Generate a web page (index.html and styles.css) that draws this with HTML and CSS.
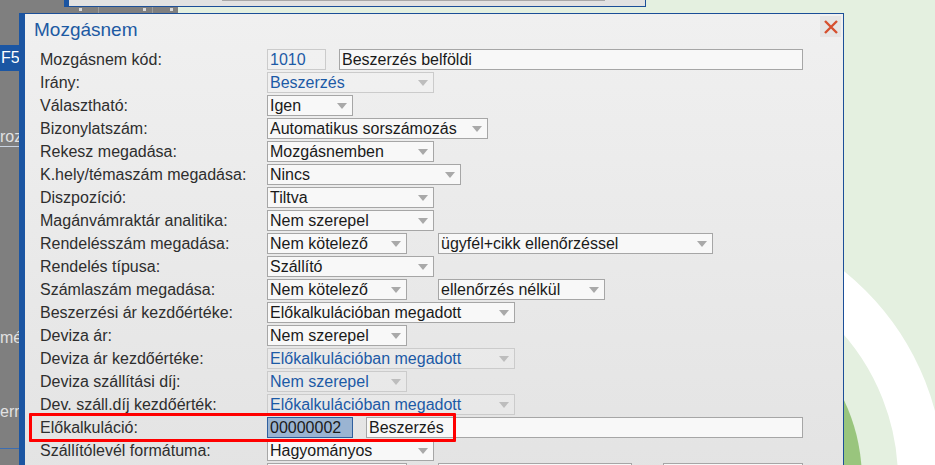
FILE: index.html
```html
<!DOCTYPE html>
<html lang="hu">
<head>
    <meta charset="UTF-8">
    <link rel="stylesheet" href="styles.css">
</head>
<body>
<div class="desktop">
    <svg class="backdrop" width="935" height="465" viewBox="0 0 935 465">
        <circle cx="676" cy="480" r="245" fill="none" stroke="#ffffff" stroke-width="46"/>
        <circle cx="676" cy="480" r="186" fill="#99c57d"/>
    </svg>

    <div class="app-panel">
        <div class="panel-toolbar">
            <span class="tool-mark m1"></span>
            <span class="tool-sep s1"></span>
            <span class="tool-mark m2"></span>
            <span class="tool-sep s2"></span>
            <span class="tool-mark m3"></span>
        </div>
        <div class="panel-side">
            <div class="side-tab">F5</div>
            <div class="side-item item-top">rozás</div>
            <div class="side-item item-mid">méret</div>
            <div class="side-item item-low">ermék</div>
            <div class="side-line"></div>
        </div>
    </div>

    <div class="back-window">
        <div class="back-scroll"></div>
    </div>

    <div class="dialog">
        <div class="dialog-header">
            <h1 class="dialog-title">Mozgásnem</h1>
            <button class="close-btn" title="Bezárás">
                <svg viewBox="0 0 14 14" width="14" height="14">
                    <path d="M1 1L13 13M13 1L1 13"/>
                </svg>
            </button>
        </div>

        <div class="form">
            <div class="form-row">
                <div class="form-label">Mozgásnem kód:</div>
                <div class="form-fields tight">
                    <div class="field disabled w59">1010</div>
                    <div class="field w464">Beszerzés belföldi</div>
                </div>
            </div>
            <div class="form-row">
                <div class="form-label">Irány:</div>
                <div class="form-fields">
                    <div class="field select disabled w167">Beszerzés</div>
                </div>
            </div>
            <div class="form-row">
                <div class="form-label">Választható:</div>
                <div class="form-fields">
                    <div class="field select w86">Igen</div>
                </div>
            </div>
            <div class="form-row">
                <div class="form-label">Bizonylatszám:</div>
                <div class="form-fields">
                    <div class="field select w221">Automatikus sorszámozás</div>
                </div>
            </div>
            <div class="form-row">
                <div class="form-label">Rekesz megadása:</div>
                <div class="form-fields">
                    <div class="field select w167">Mozgásnemben</div>
                </div>
            </div>
            <div class="form-row">
                <div class="form-label">K.hely/témaszám megadása:</div>
                <div class="form-fields">
                    <div class="field select w194">Nincs</div>
                </div>
            </div>
            <div class="form-row">
                <div class="form-label">Diszpozíció:</div>
                <div class="form-fields">
                    <div class="field select w167">Tiltva</div>
                </div>
            </div>
            <div class="form-row">
                <div class="form-label">Magánvámraktár analitika:</div>
                <div class="form-fields">
                    <div class="field select w167">Nem szerepel</div>
                </div>
            </div>
            <div class="form-row">
                <div class="form-label">Rendelésszám megadása:</div>
                <div class="form-fields">
                    <div class="field select w140">Nem kötelező</div>
                    <div class="field select w275">ügyfél+cikk ellenőrzéssel</div>
                </div>
            </div>
            <div class="form-row">
                <div class="form-label">Rendelés típusa:</div>
                <div class="form-fields">
                    <div class="field select w167">Szállító</div>
                </div>
            </div>
            <div class="form-row">
                <div class="form-label">Számlaszám megadása:</div>
                <div class="form-fields">
                    <div class="field select w140">Nem kötelező</div>
                    <div class="field select w167">ellenőrzés nélkül</div>
                </div>
            </div>
            <div class="form-row">
                <div class="form-label">Beszerzési ár kezdőértéke:</div>
                <div class="form-fields">
                    <div class="field select w248">Előkalkulációban megadott</div>
                </div>
            </div>
            <div class="form-row">
                <div class="form-label">Deviza ár:</div>
                <div class="form-fields">
                    <div class="field select w140">Nem szerepel</div>
                </div>
            </div>
            <div class="form-row">
                <div class="form-label">Deviza ár kezdőértéke:</div>
                <div class="form-fields">
                    <div class="field select disabled w248">Előkalkulációban megadott</div>
                </div>
            </div>
            <div class="form-row">
                <div class="form-label">Deviza szállítási díj:</div>
                <div class="form-fields">
                    <div class="field select disabled w140">Nem szerepel</div>
                </div>
            </div>
            <div class="form-row">
                <div class="form-label">Dev. száll.díj kezdőérték:</div>
                <div class="form-fields">
                    <div class="field select disabled w248">Előkalkulációban megadott</div>
                </div>
            </div>
            <div class="form-row">
                <div class="form-label">Előkalkuláció:</div>
                <div class="form-fields tight">
                    <div class="field selected w86">00000002</div>
                    <div class="field w437">Beszerzés</div>
                </div>
            </div>
            <div class="form-row">
                <div class="form-label">Szállítólevél formátuma:</div>
                <div class="form-fields">
                    <div class="field select w167">Hagyományos</div>
                </div>
            </div>
            <div class="form-row">
                <div class="form-label"></div>
                <div class="form-fields">
                    <div class="field select w140"></div>
                    <div class="field select w194"></div>
                    <div class="field select w140"></div>
                </div>
            </div>
        </div>

        <div class="highlight"></div>
    </div>
</div>
</body>
</html>
```

FILE: styles.css
```css
html, body {
    margin: 0;
    padding: 0;
}
body {
    width: 935px;
    height: 465px;
    overflow: hidden;
    background-color: #e4f0e0;
    font-family: "Liberation Sans", Arial, sans-serif;
    font-size: 16px;
}
.desktop {
    position: relative;
    width: 935px;
    height: 465px;
    overflow: hidden;
}
.backdrop {
    position: absolute;
    left: 0;
    top: 0;
}

/* application behind the dialog */
.app-panel {
    position: absolute;
    left: 0;
    top: 0;
    width: 178px;
    height: 465px;
    background-color: #7f7f7f;
}
.panel-toolbar {
    position: relative;
    height: 13px;
}
.tool-mark {
    position: absolute;
    top: 8px;
    width: 3px;
    height: 3px;
    background-color: #d8d8d8;
}
.tool-mark.m1 { left: 79px; }
.tool-mark.m2 { left: 143px; }
.tool-mark.m3 { left: 170px; }
.tool-sep {
    position: absolute;
    top: 7px;
    width: 1px;
    height: 6px;
    background-color: #9c9c9c;
}
.tool-sep.s1 { left: 98px; }
.tool-sep.s2 { left: 152px; }
.panel-side {
    width: 178px;
    white-space: nowrap;
    color: #e2e2e2;
}
.side-tab {
    margin-top: 32px;
    height: 26px;
    line-height: 26px;
    padding-left: 1px;
    background-color: #1b56a3;
    color: #fff;
}
.side-item {
    height: 19px;
    line-height: 19px;
}
.item-top {
    margin-top: 56px;
    border-bottom: 1px solid #c9d3e0;
}
.item-mid { margin-top: 181px; }
.item-low { margin-top: 55px; }
.side-line {
    margin-top: 27px;
    height: 1px;
    background-color: #3b6db2;
}

.back-window {
    position: absolute;
    left: 64px;
    top: 0;
    width: 582px;
    height: 7px;
    box-sizing: border-box;
    background-color: #e2e2e2;
    border-left: 5px solid #1b55a2;
    border-right: 1px solid #1b4f98;
    border-bottom: 1px solid #1b4f98;
}
.back-scroll {
    margin-left: 153px;
    width: 383px;
    height: 1px;
    background-color: #a8a8a8;
}

/* dialog */
.dialog {
    position: absolute;
    left: 19px;
    top: 13px;
    width: 825px;
    height: 470px;
    box-sizing: border-box;
    border: 1px solid #1b4f98;
    border-left: 6px solid #1b55a2;
    border-bottom: none;
    background: linear-gradient(#f0f0f0, #e3e3e3);
}
.dialog-header {
    display: flex;
    justify-content: space-between;
    align-items: flex-start;
    padding: 2px 2px 0 9px;
}
.dialog-title {
    margin: 2px 0 0;
    font-size: 19px;
    line-height: 23px;
    font-weight: normal;
    color: #1d5aa3;
}
.close-btn {
    width: 21px;
    height: 21px;
    padding: 0;
    border: none;
    background-color: #e5e5e5;
    display: flex;
    align-items: center;
    justify-content: center;
    cursor: pointer;
}
.close-btn svg path {
    stroke: #d6502f;
    stroke-width: 2.4;
    fill: none;
}

.form {
    padding: 7px 0 0 15px;
}
.form-row {
    display: flex;
    align-items: center;
    height: 23px;
}
.form-label {
    width: 227px;
    flex-shrink: 0;
    line-height: 23px;
    color: #2e2e2e;
    white-space: nowrap;
}
.form-fields {
    display: flex;
    gap: 31px;
}
.form-fields.tight {
    gap: 13px;
}
.field {
    position: relative;
    box-sizing: border-box;
    height: 21px;
    line-height: 19px;
    padding: 0 2px;
    border: 1px solid #a6a6a6;
    background-color: #f8f8f8;
    color: #1a1a1a;
    white-space: nowrap;
    overflow: hidden;
}
.field.disabled {
    border-color: #cbcbcb;
    background-color: rgba(255, 255, 255, 0.12);
    color: #1c5aa6;
}
.field.selected {
    border-color: #2f5f9e;
    background-color: #9ab4d2;
}
.field.select::after {
    content: "";
    position: absolute;
    right: 5px;
    top: 7px;
    border-left: 5px solid transparent;
    border-right: 5px solid transparent;
    border-top: 6px solid #a9a9a9;
}
.field.select.disabled::after {
    border-top-color: #bdbdbd;
}
.w59 { width: 59px; }
.w86 { width: 86px; }
.w140 { width: 140px; }
.w167 { width: 167px; }
.w194 { width: 194px; }
.w221 { width: 221px; }
.w248 { width: 248px; }
.w275 { width: 275px; }
.w437 { width: 437px; }
.w464 { width: 464px; }

/* annotation drawn over the form */
.highlight {
    position: absolute;
    left: 4px;
    top: 399px;
    width: 427px;
    height: 29px;
    box-sizing: border-box;
    border: 3px solid #ff0000;
    border-radius: 1px;
}
```
